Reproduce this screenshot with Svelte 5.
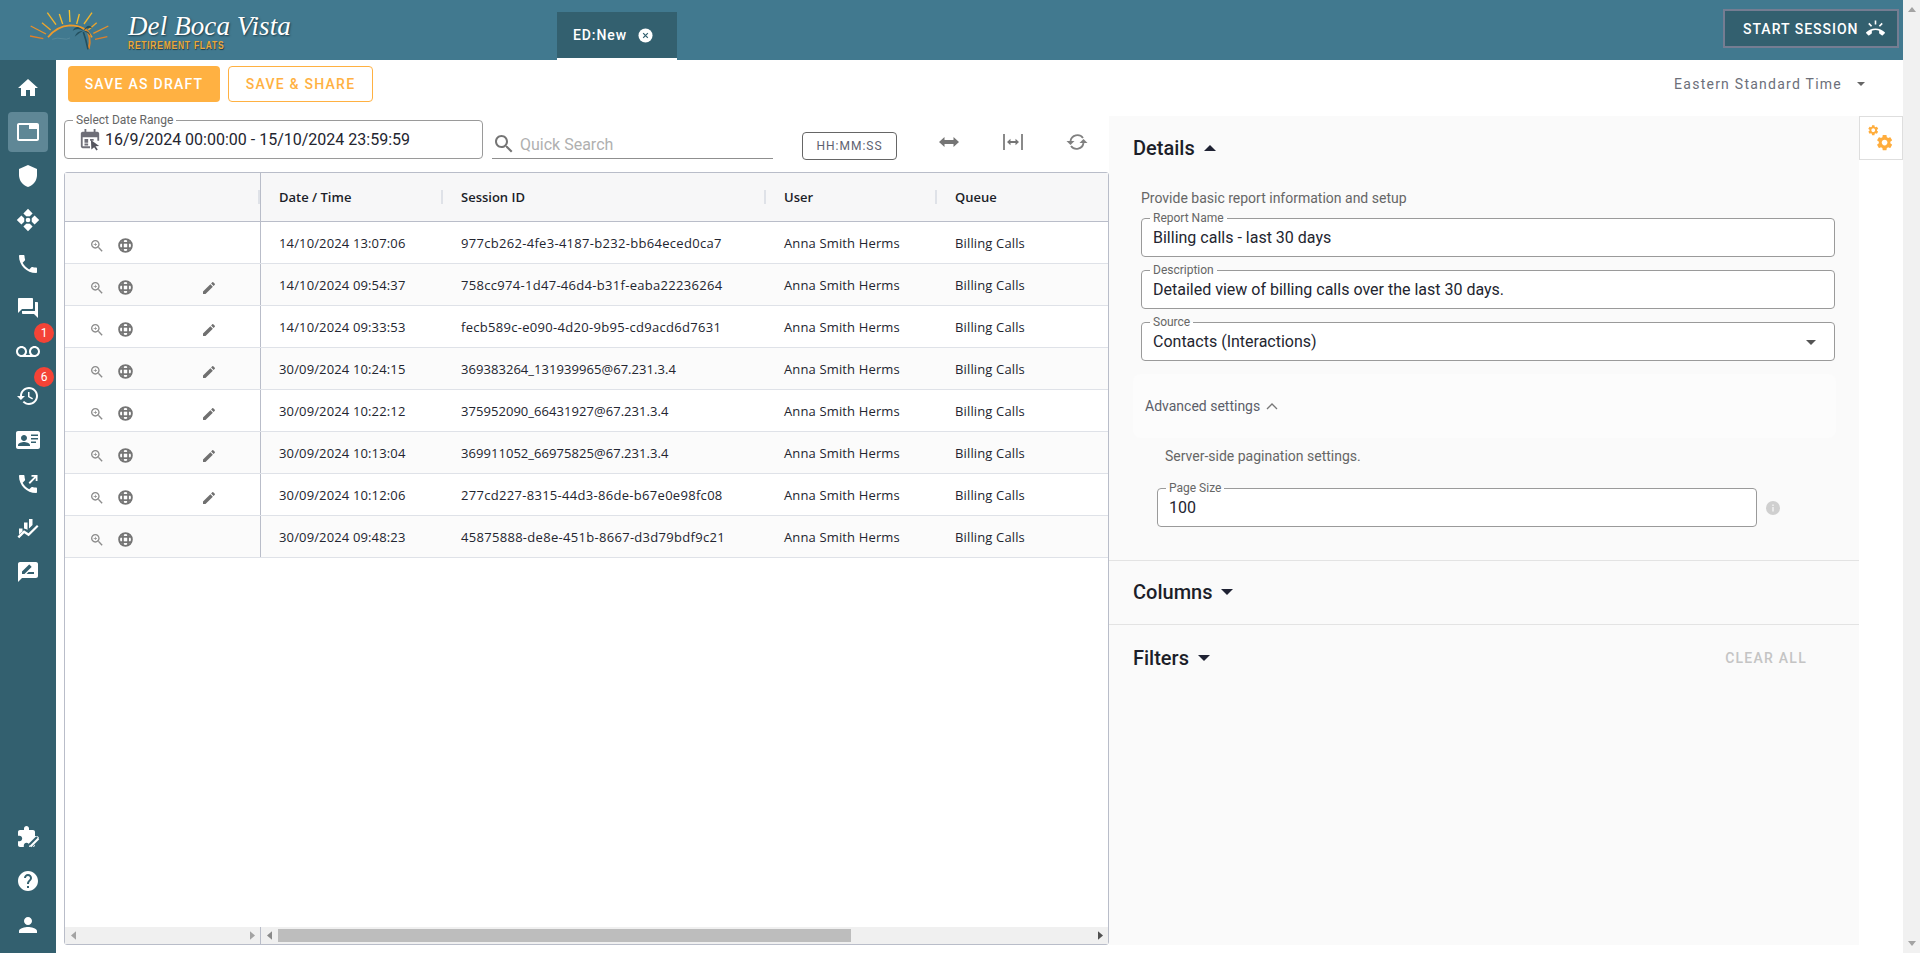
<script>
  const P = {
    home: 'M10 20v-6h4v6h5v-8h3L12 3 2 12h3v8z',
    tab: 'M21 3H3c-1.1 0-2 .9-2 2v14c0 1.1.9 2 2 2h18c1.1 0 2-.9 2-2V5c0-1.1-.9-2-2-2zm0 16H3V5h10v4h8v10z',
    shield: 'M12 1L3 5v6c0 5.55 3.84 10.74 9 12 5.16-1.26 9-6.45 9-12V5l-9-4z',
    hub: 'M12 .8l4.600 4.600L12 10 7.400 5.400zM12 14l4.600 4.600L12 23.200l-4.600-4.600zM5.400 7.400L10 12l-4.600 4.600L.8 12zM18.600 7.400L23.200 12l-4.600 4.600L14 12z',
    phone: 'M6.620 10.790c1.440 2.830 3.760 5.140 6.590 6.590l2.200-2.200c.27-.27.67-.36 1.020-.24 1.120.37 2.330.57 3.570.57.55 0 1 .45 1 1V20c0 .55-.45 1-1 1-9.390 0-17-7.610-17-17 0-.55.45-1 1-1h3.500c.55 0 1 .45 1 1 0 1.250.2 2.450.57 3.570.11.35.03.74-.25 1.020l-2.200 2.200z',
    forum: 'M21 6h-2v9H6v2c0 .55.45 1 1 1h11l4 4V7c0-.55-.45-1-1-1zm-4 6V3c0-.55-.45-1-1-1H3c-.55 0-1 .45-1 1v14l4-4h10c.55 0 1-.45 1-1z',
    voicemail: 'M18.500 6C15.460 6 13 8.460 13 11.500c0 1.330.47 2.550 1.260 3.500H9.740c.79-.95 1.260-2.170 1.260-3.500C11 8.460 8.540 6 5.500 6S0 8.460 0 11.500 2.460 17 5.500 17h13c3.040 0 5.500-2.460 5.500-5.500S21.540 6 18.500 6zm-13 9C3.570 15 2 13.430 2 11.500S3.570 8 5.500 8 9 9.570 9 11.500 7.430 15 5.500 15zm13 0c-1.930 0-3.500-1.570-3.500-3.500S16.570 8 18.500 8 22 9.570 22 11.500 20.430 15 18.500 15z',
    history: 'M13 3c-4.970 0-9 4.030-9 9H1l3.890 3.890.07.14L9 12H6c0-3.870 3.130-7 7-7s7 3.130 7 7-3.130 7-7 7c-1.930 0-3.680-.79-4.940-2.060l-1.420 1.420C8.270 19.990 10.510 21 13 21c4.970 0 9-4.030 9-9s-4.030-9-9-9zm-1 5v5l4.280 2.540.72-1.210-3.500-2.080V8H12z',
    card: 'M22 3H2C.9 3 0 3.900 0 5v14c0 1.100.9 2 2 2h20c1.100 0 2-.9 2-2V5c0-1.100-.9-2-2-2zM8 7c1.660 0 3 1.340 3 3s-1.340 3-3 3-3-1.340-3-3 1.340-3 3-3zm6 11H2v-1c0-2 4-3.100 6-3.100s6 1.100 6 3.100v1zm8-10h-7V6.500h7V8zm0 3.500h-7V10h7v1.500zm-2 3.500h-5v-1.500h5V15z',
    outgoing: 'M20 15.500c-1.250 0-2.450-.2-3.570-.57-.35-.11-.74-.03-1.020.24l-2.200 2.200c-2.830-1.440-5.150-3.750-6.590-6.590l2.200-2.210c.28-.26.36-.65.25-1C8.700 6.450 8.500 5.250 8.500 4c0-.55-.45-1-1-1H4c-.55 0-1 .45-1 1 0 9.390 7.610 17 17 17 .55 0 1-.45 1-1v-3.500c0-.55-.45-1-1-1zM15.500 3v1.800h2.900L12.600 10.600l1.300 1.300 5.800-5.800V9H21.500V3z',
    chart: 'M3 18.500v-6h3.500v2.700zM8 12.500V6.500h3.500v7.500l-1-.7zM13 12.500V3h3.500v6zM1.500 20.500l6.500-6.200 4.500 3 8.500-8.300 1.500 1.500-9.800 9.800-4.500-3-5 5z',
    review: 'M20 2H4c-1.100 0-2 .9-2 2v18l4-4h14c1.100 0 2-.9 2-2V4c0-1.100-.9-2-2-2zM6 14v-2.470l6.880-6.880c.2-.2.51-.2.71 0l1.770 1.770c.2.2.2.51 0 .71L8.470 14H6zm12 0h-7.500l2-2H18v2z',
    ext: 'M20.500 11H19V7c0-1.100-.9-2-2-2h-4V3.500C13 2.120 11.880 1 10.500 1S8 2.120 8 3.500V5H4c-1.100 0-1.990.9-1.990 2v3.800H3.500c1.490 0 2.700 1.210 2.700 2.700s-1.210 2.700-2.700 2.700H2V20c0 1.100.9 2 2 2h3.800v-1.500c0-1.490 1.210-2.700 2.700-2.700 1.490 0 2.700 1.210 2.700 2.700V22H17c1.100 0 2-.9 2-2v-4h1.500c1.380 0 2.500-1.120 2.500-2.500S21.880 11 20.500 11z',
    help: 'M12 2C6.480 2 2 6.480 2 12s4.480 10 10 10 10-4.480 10-10S17.520 2 12 2zm1 17h-2v-2h2v2zm2.070-7.750l-.9.92C13.450 12.900 13 13.500 13 15h-2v-.5c0-1.100.45-2.100 1.170-2.830l1.240-1.260c.37-.36.59-.86.59-1.410 0-1.100-.9-2-2-2s-2 .9-2 2H8c0-2.210 1.790-4 4-4s4 1.790 4 4c0 .88-.36 1.680-.93 2.250z',
    person: 'M12 12c2.210 0 4-1.790 4-4s-1.790-4-4-4-4 1.790-4 4 1.790 4 4 4zm0 2c-2.670 0-9 1.340-9 4v2h18v-2c0-2.660-6.330-4-9-4z',
    search: 'M15.500 14h-.79l-.28-.27C15.410 12.590 16 11.110 16 9.500 16 5.910 13.090 3 9.500 3S3 5.910 3 9.500 5.910 16 9.500 16c1.610 0 3.090-.59 4.230-1.570l.27.28v.79l5 4.990L20.490 19l-4.990-5zm-6 0C7.010 14 5 11.990 5 9.500S7.010 5 9.500 5 14 7.010 14 9.500 11.990 14 9.500 14z',
    zoomin: 'M15.500 14h-.79l-.28-.27C15.410 12.590 16 11.110 16 9.500 16 5.910 13.090 3 9.500 3S3 5.910 3 9.500 5.910 16 9.500 16c1.610 0 3.090-.59 4.230-1.570l.27.28v.79l5 4.990L20.490 19l-4.990-5zm-6 0C7.010 14 5 11.990 5 9.500S7.010 5 9.500 5 14 7.010 14 9.500 11.990 14 9.500 14zM12 10h-2v2H9v-2H7V9h2V7h1v2h2v1z',
    edit: 'M3 17.250V21h3.750L17.810 9.940l-3.750-3.750L3 17.250zM20.710 7.040c.39-.39.39-1.020 0-1.410l-2.340-2.340c-.39-.39-1.020-.39-1.410 0l-1.830 1.830 3.750 3.750 1.830-1.830z',
    ring: 'M23.710 16.670C20.660 13.780 16.540 12 12 12 7.460 12 3.340 13.780.29 16.670c-.18.18-.29.43-.29.71 0 .28.11.53.29.71l2.480 2.480c.18.18.43.29.71.29.27 0 .52-.11.7-.28.79-.74 1.690-1.360 2.660-1.850.33-.16.56-.5.56-.9v-3.100c1.450-.48 3-.73 4.600-.73s3.150.25 4.600.72v3.100c0 .39.23.74.56.9.98.49 1.870 1.120 2.670 1.850.18.18.43.28.7.28.28 0 .53-.11.71-.29l2.480-2.480c.18-.18.29-.43.29-.71 0-.27-.11-.52-.29-.7zM21.160 6.260l-1.410-1.410-3.560 3.550 1.410 1.410s3.450-3.520 3.560-3.550zM13 2h-2v5h2V2zM6.400 9.810L7.810 8.400 4.260 4.840 2.840 6.260c.11.03 3.560 3.550 3.560 3.550z',
    gear: 'M19.140 12.940c.04-.3.06-.61.06-.94 0-.32-.02-.64-.07-.94l2.030-1.580c.18-.14.23-.41.12-.61l-1.920-3.320c-.12-.22-.37-.29-.59-.22l-2.390.96c-.5-.38-1.030-.7-1.620-.94l-.36-2.540c-.04-.24-.24-.41-.48-.41h-3.840c-.24 0-.43.17-.47.41l-.36 2.540c-.59.24-1.130.57-1.620.94l-2.390-.96c-.22-.08-.47 0-.59.22L2.740 8.870c-.12.21-.08.47.12.61l2.030 1.580c-.05.3-.09.63-.09.94s.02.64.07.94l-2.030 1.580c-.18.14-.23.41-.12.61l1.920 3.320c.12.22.37.29.59.22l2.390-.96c.5.38 1.030.7 1.620.94l.36 2.540c.05.24.24.41.48.41h3.840c.24 0 .44-.17.47-.41l.36-2.540c.59-.24 1.130-.56 1.620-.94l2.390.96c.22.08.47 0 .59-.22l1.920-3.320c.12-.22.07-.47-.12-.61l-2.010-1.580zM12 15.600c-1.980 0-3.600-1.620-3.600-3.600s1.620-3.600 3.600-3.600 3.600 1.620 3.600 3.600-1.620 3.600-3.600 3.600z'
  };
  const top = [
    { i: 'home' }, { i: 'tab', active: true }, { i: 'shield' }, { i: 'hub' }, { i: 'phone' }, { i: 'forum' },
    { i: 'voicemail', badge: 1 }, { i: 'history', badge: 6 }, { i: 'card' }, { i: 'outgoing' }, { i: 'chart' }, { i: 'review' }
  ];
  const rows = [
    ['14/10/2024 13:07:06', '977cb262-4fe3-4187-b232-bb64eced0ca7', false],
    ['14/10/2024 09:54:37', '758cc974-1d47-46d4-b31f-eaba22236264', true],
    ['14/10/2024 09:33:53', 'fecb589c-e090-4d20-9b95-cd9acd6d7631', true],
    ['30/09/2024 10:24:15', '369383264_131939965@67.231.3.4', true],
    ['30/09/2024 10:22:12', '375952090_66431927@67.231.3.4', true],
    ['30/09/2024 10:13:04', '369911052_66975825@67.231.3.4', true],
    ['30/09/2024 10:12:06', '277cd227-8315-44d3-86de-b67e0e98fc08', true],
    ['30/09/2024 09:48:23', '45875888-de8e-451b-8667-d3d79bdf9c21', false]
  ];
  const rays = [
    [32,78,78,102,'#e8912a'],[66,68,92,90,'#eda52c'],[82,38,108,74,'#f2b52d'],[118,42,128,72,'#f5bd2e'],
    [148,30,150,66,'#f8c52e'],[178,42,170,72,'#f5bd2e'],[216,38,192,72,'#f2b52d'],[230,68,205,90,'#eda52c'],
    [265,78,220,100,'#e8912a'],[262,110,225,118,'#e07f28'],[30,108,70,116,'#e07f28']
  ];
</script>

<div class="page">
  <div class="app">
    <header class="topbar">
      <div class="logo">
        <svg class="sun" viewBox="0 0 300 180" width="100" height="60" aria-hidden="true">
          {#each rays as r}
            <line x1={r[0]} y1={r[1]} x2={r[2]} y2={r[3]} stroke={r[4]} stroke-width="4" />
          {/each}
          <path d="M84 112Q110 78 150 76Q196 76 216 112" fill="none" stroke="#ee9a2b" stroke-width="5" />
          <path d="M196 84Q216 110 206 146" fill="none" stroke="#d9822b" stroke-width="6" />
          <path d="M190 96Q198 118 204 148" fill="none" stroke="#24505f" stroke-width="5" />
          <path d="M190 92Q170 70 158 92Q174 82 190 92ZM190 92Q205 68 216 84Q202 80 190 92ZM190 92Q170 92 164 110Q178 98 190 92ZM190 92Q208 92 212 108Q202 96 190 92Z" fill="#24505f" />
          <path d="M96 118q16-6 30-2t24-2" fill="none" stroke="#5f8fa0" stroke-width="2" />
        </svg>
        <div class="brand">
          <div class="script">Del Boca Vista</div>
          <div class="flats">RETIREMENT FLATS</div>
        </div>
      </div>
      <div class="tab">
        <span>ED:New</span>
        <svg viewBox="0 0 16 16" width="15" height="15" aria-hidden="true"><circle cx="8" cy="8" r="7.500" fill="#fff" /><path d="M5.500 5.500l5 5M10.500 5.500l-5 5" stroke="#33606f" stroke-width="1.300" /></svg>
      </div>
      <button class="start">START SESSION <svg viewBox="0 0 24 24" width="19" height="19" aria-hidden="true"><path d={P.ring} fill="#fff" /></svg></button>
    </header>

    <div class="body">
      <nav class="side">
        <div class="side-group">
          {#each top as it}
            <div class="nav-item">
              <span class="nav-ic" class:active={it.active}>
                <svg viewBox="0 0 24 24" width="24" height="24" aria-hidden="true">
                  <path d={P[it.i]} fill="#fff" />
                  {#if it.i === 'hub'}
                    <circle cx="12" cy="12" r="3.800" fill="#33606f" />
                    <circle cx="12" cy="12" r="2.300" fill="#fff" />
                  {/if}
                </svg>
              </span>
              {#if it.badge}<span class="badge">{it.badge}</span>{/if}
            </div>
          {/each}
        </div>
        <div class="side-group">
          <div class="nav-item">
            <span class="nav-ic">
              <svg viewBox="0 0 24 24" width="24" height="24" aria-hidden="true">
                <path d={P.ext} fill="#fff" />
                <path d="M14 21l8-8" stroke="#33606f" stroke-width="5" />
                <path d="M14.500 21.500l8-8" stroke="#fff" stroke-width="2.200" />
              </svg>
            </span>
          </div>
          <div class="nav-item"><span class="nav-ic"><svg viewBox="0 0 24 24" width="24" height="24" aria-hidden="true"><path d={P.help} fill="#fff" /></svg></span></div>
          <div class="nav-item"><span class="nav-ic"><svg viewBox="0 0 24 24" width="24" height="24" aria-hidden="true"><path d={P.person} fill="#fff" /></svg></span></div>
        </div>
      </nav>

      <main class="main">
        <div class="toolbar">
          <button class="btn solid">SAVE AS DRAFT</button>
          <button class="btn outline">SAVE &amp; SHARE</button>
          <div class="tz">
            <span>Eastern Standard Time</span>
            <svg viewBox="0 0 10 5" width="8" height="4" aria-hidden="true"><path d="M0 0h10L5 5z" fill="#666" /></svg>
          </div>
        </div>

        <div class="content">
          <section class="left">
            <div class="filters">
              <fieldset class="field date">
                <legend>Select Date Range</legend>
                <div class="date-val">
                  <svg viewBox="0 0 24 24" width="22" height="24" aria-hidden="true">
                    <path d="M6 1h2v3h8V1h2v3h2c1 0 2 1 2 2v8h-2v-4H4v10h8v2H4c-1 0-2-1-2-2V6c0-1 1-2 2-2h2z" fill="#6f6f78" />
                    <path d="M6 12h4v4H6zM12 12h4v2h-4zM6 17h4v2H6z" fill="#6f6f78" />
                    <path d="M13 13l9 6.500-4 .5 2.500 3.500-1.500 1-2.500-3.500-3 2.500z" fill="#55555e" />
                  </svg>
                  <span>16/9/2024 00:00:00 - 15/10/2024 23:59:59</span>
                </div>
              </fieldset>
              <div class="search">
                <svg viewBox="0 0 24 24" width="24" height="24" aria-hidden="true"><path d={P.search} fill="#757575" /></svg>
                <span>Quick Search</span>
              </div>
              <button class="hms">HH:MM:SS</button>
              <div class="tool">
                <svg viewBox="0 0 20 10" width="20" height="10" aria-hidden="true"><path d="M0 5l5.500-5v3h9V0L20 5l-5.500 5V7h-9v3z" fill="#757575" /></svg>
              </div>
              <div class="tool">
                <svg viewBox="0 0 20 16" width="20" height="16" aria-hidden="true"><path d="M0 0h2v16H0zM18 0h2v16h-2z" fill="#8a8a8a" /><path d="M4 8l3.500-3.200v2.200h5V4.800L16 8l-3.500 3.200V9h-5v2.200z" fill="#757575" /></svg>
              </div>
              <div class="tool">
                <svg viewBox="0 0 22 18" width="22" height="18" aria-hidden="true">
                  <path d="M4.500 8A7 7 0 0 1 17 5" fill="none" stroke="#808080" stroke-width="1.800" />
                  <path d="M17.500 10A7 7 0 0 1 5 13" fill="none" stroke="#808080" stroke-width="1.800" />
                  <path d="M0.500 8h8L4.500 12zM13.500 10h8L17.500 6z" fill="#808080" />
                </svg>
              </div>
            </div>

            <div class="table">
              <div class="row head">
                <div class="frozen"><i class="sep"></i></div>
                <div class="c">Date / Time<i class="sep"></i></div>
                <div class="c">Session ID<i class="sep"></i></div>
                <div class="c">User<i class="sep"></i></div>
                <div class="c">Queue</div>
              </div>
              {#each rows as r, idx}
                <div class="row body-row" class:alt={idx % 2 === 1}>
                  <div class="frozen icons">
                    <svg viewBox="0 0 24 24" width="16" height="16" aria-hidden="true"><path d={P.zoomin} fill="#8c8c8c" /></svg>
                    <svg viewBox="0 0 16 16" width="15" height="15" aria-hidden="true">
                      <circle cx="8" cy="8" r="6.800" fill="none" stroke="#757575" stroke-width="2" />
                      <path d="M5.300 1.500v13M10.700 1.500v13M1.500 5.300h13M1.500 10.700h13" stroke="#757575" stroke-width="1.900" />
                      <rect x="6.300" y="6.300" width="3.400" height="3.400" fill="#fff" />
                    </svg>
                    {#if r[2]}
                      <svg viewBox="0 0 24 24" width="16" height="16" aria-hidden="true"><path d={P.edit} fill="#707070" /></svg>
                    {/if}
                  </div>
                  <div class="c">{r[0]}</div>
                  <div class="c sid" class:ip={r[1].includes('@')}>{r[1]}</div>
                  <div class="c">Anna Smith Herms</div>
                  <div class="c">Billing Calls</div>
                </div>
              {/each}
              <div class="spacer"></div>
              <div class="hscroll">
                <div class="hs hs-left">
                  <svg viewBox="0 0 6 10" width="5" height="9" aria-hidden="true"><path d="M6 0v10L0 5z" fill="#a3a3a3" /></svg>
                  <svg viewBox="0 0 6 10" width="5" height="9" aria-hidden="true"><path d="M0 0v10l6-5z" fill="#a3a3a3" /></svg>
                </div>
                <div class="hs hs-right">
                  <svg viewBox="0 0 6 10" width="5" height="9" aria-hidden="true"><path d="M6 0v10L0 5z" fill="#8a8a8a" /></svg>
                  <div class="thumb"></div>
                  <svg class="end" viewBox="0 0 6 10" width="5" height="9" aria-hidden="true"><path d="M0 0v10l6-5z" fill="#505050" /></svg>
                </div>
              </div>
            </div>
          </section>

          <aside class="panel">
            <div class="sec details">
              <h2>Details <svg viewBox="0 0 12 6" width="12" height="6" aria-hidden="true"><path d="M0 6h12L6 0z" fill="#1f2233" /></svg></h2>
              <div class="inner">
                <p class="hint">Provide basic report information and setup</p>
                <fieldset class="field"><legend>Report Name</legend><div class="val">Billing calls - last 30 days</div></fieldset>
                <fieldset class="field"><legend>Description</legend><div class="val">Detailed view of billing calls over the last 30 days.</div></fieldset>
                <fieldset class="field">
                  <legend>Source</legend>
                  <div class="val sel">Contacts (Interactions)<svg viewBox="0 0 10 5" width="10" height="5" aria-hidden="true"><path d="M0 0h10L5 5z" fill="#555" /></svg></div>
                </fieldset>
                <div class="adv">
                  <span>Advanced settings</span>
                  <svg viewBox="0 0 12 8" width="12" height="8" aria-hidden="true"><path d="M1 7l5-5 5 5" fill="none" stroke="#777" stroke-width="1.300" /></svg>
                </div>
                <p class="server">Server-side pagination settings.</p>
                <div class="page-row">
                  <fieldset class="field page-size"><legend>Page Size</legend><div class="val">100</div></fieldset>
                  <svg viewBox="0 0 14 14" width="14" height="14" aria-hidden="true"><circle cx="7" cy="7" r="7" fill="#cfcfcf" /><path d="M6.300 6h1.400v4.500H6.300zM6.300 3.500h1.400v1.400H6.300z" fill="#f4f4f4" /></svg>
                </div>
              </div>
            </div>
            <div class="sec collapsed">
              <h2>Columns <svg viewBox="0 0 12 6" width="12" height="6" aria-hidden="true"><path d="M0 0h12L6 6z" fill="#1f2233" /></svg></h2>
            </div>
            <div class="sec filt">
              <h2>Filters <svg viewBox="0 0 12 6" width="12" height="6" aria-hidden="true"><path d="M0 0h12L6 6z" fill="#1f2233" /></svg></h2>
              <span class="clear">CLEAR ALL</span>
            </div>
          </aside>

          <div class="gearcol">
            <div class="geartab">
              <svg viewBox="0 0 32 32" width="32" height="32" aria-hidden="true">
                <path d={P.gear} fill="#ffad3d" transform="translate(2 2) scale(.52)" />
                <path d={P.gear} fill="#ffad3d" transform="translate(10 11) scale(.8)" />
              </svg>
            </div>
          </div>
        </div>
      </main>
    </div>
  </div>
  <div class="vscroll">
    <svg viewBox="0 0 8 5" width="8" height="5" aria-hidden="true"><path d="M0 5h8L4 0z" fill="#a3a3a3" /></svg>
    <svg viewBox="0 0 8 5" width="8" height="5" aria-hidden="true"><path d="M0 0h8L4 5z" fill="#a3a3a3" /></svg>
  </div>
</div>

<style>
  :global(body) { margin: 0; background: #fff; font-family: Roboto, "Liberation Sans", sans-serif; }
  * { box-sizing: border-box; }
  .page { display: flex; width: 1920px; height: 953px; overflow: hidden; }
  .app { width: 1903px; display: flex; flex-direction: column; }
  .vscroll { width: 17px; background: #f1f1f1; display: flex; flex-direction: column; justify-content: space-between; align-items: center; padding: 7px 0; }

  .topbar { height: 60px; background: #41798f; display: flex; align-items: flex-end; flex: none; }
  .logo { width: 537px; margin-left: 20px; height: 60px; display: flex; }
  .sun { flex: none; }
  .brand { margin-left: 8px; padding-top: 12px; }
  .script { font-family: "Liberation Serif", serif; font-style: italic; font-size: 27px; line-height: 28px; color: #fff; letter-spacing: .1px; text-shadow: 1px 1px 2px #1e3d4a; white-space: nowrap; }
  .flats { font-family: "Liberation Sans", sans-serif; font-size: 11px; font-weight: 700; line-height: 11px; letter-spacing: 1px; color: #eba83a; text-shadow: 1px 1px 1px #1e3d4a; white-space: nowrap; transform: scaleX(.77); transform-origin: left; }
  .tab { width: 120px; height: 48px; background: #33606f; border-bottom: 2px solid #fff; color: #fff; font-size: 14px; font-weight: 500; letter-spacing: .9px; display: flex; align-items: center; padding-left: 16px; gap: 11px; }
  .start { margin: 0 4px 12px auto; width: 176px; height: 39px; background: #33606f; border: 2px solid #757d92; color: #fff; font: 500 14px Roboto, sans-serif; letter-spacing: 1px; display: flex; align-items: center; gap: 7px; padding: 0 0 0 18px; }

  .body { flex: 1; display: flex; min-height: 0; }
  .side { width: 56px; background: #33606f; flex: none; display: flex; flex-direction: column; justify-content: space-between; padding: 6px 0; }
  .nav-item { height: 44px; display: flex; align-items: center; justify-content: center; position: relative; }
  .nav-ic { width: 40px; height: 40px; display: flex; align-items: center; justify-content: center; border-radius: 4px; }
  .nav-ic.active { background: #5f8796; }
  .badge { position: absolute; left: 34px; top: -7px; width: 20px; height: 20px; border-radius: 50%; background: #f44336; color: #fff; font-size: 12px; display: flex; align-items: center; justify-content: center; }

  .main { flex: 1; display: flex; flex-direction: column; min-width: 0; }
  .toolbar { height: 56px; flex: none; display: flex; align-items: flex-start; padding: 6px 0 0 12px; gap: 8px; }
  .btn { height: 36px; border-radius: 4px; font: 500 14px Roboto, sans-serif; letter-spacing: 1.250px; padding: 0; }
  .btn.solid { width: 152px; background: #ffb142; border: 0; color: #fff; }
  .btn.outline { width: 145px; background: #fff; border: 1px solid #ffb142; color: #ffb142; }
  .tz { margin-left: auto; margin-right: 38px; height: 36px; display: flex; align-items: center; gap: 15px; color: #6c6f7a; font-size: 14px; letter-spacing: 1.250px; }

  .content { flex: 1; display: flex; min-height: 0; }
  .left { width: 1053px; flex: none; padding: 0 0 8px 8px; display: flex; flex-direction: column; }
  .filters { height: 56px; flex: none; display: flex; align-items: flex-start; }
  .field { margin: 0; min-width: 0; padding: 0 9px; border: 1px solid #9a9a9a; border-radius: 4px; background: #fff; height: 45px; display: block; }
  .field legend { font-size: 12px; line-height: 12px; color: #666; padding: 0 3px; margin-left: -1px; }
  .date { width: 419px; margin-top: -2px; }
  .date-val { display: flex; align-items: center; gap: 4px; font-size: 16px; color: #23252f; height: 26px; padding-left: 5px; white-space: nowrap; }
  .search { width: 281px; height: 38px; margin: 5px 0 0 9px; border-bottom: 1px solid #8f8f8f; display: flex; align-items: center; gap: 4px; padding: 8px 0 0 0; color: #b0b0b0; font-size: 16px; }
  .search span { padding-top: 2px; }
  .hms { width: 95px; height: 28px; margin: 16px 0 0 29px; background: #fff; border: 1px solid #666; border-radius: 4px; color: #5e6270; font: 400 12px Roboto, sans-serif; letter-spacing: 1px; padding: 0; }
  .tool { width: 64px; height: 20px; margin-top: 16px; display: flex; align-items: center; justify-content: center; }
  .hms + .tool { margin-left: 20px; }

  .table { flex: 1; min-height: 0; border: 1px solid #b9bdc9; border-radius: 3px; display: flex; flex-direction: column; font-family: "Open Sans", sans-serif; font-size: 13px; color: #23252f; }
  .row { height: 42px; flex: none; display: grid; grid-template-columns: 196px 182px 323px 171px 171px; border-bottom: 1px solid #dfe2e8; }
  .row.alt { background: #fbfbfb; }
  .row.head { height: 49px; background: #f7f7f8; border-bottom-color: #b9bdc9; font-weight: 600; color: #1c1e29; }
  .body-row .c { letter-spacing: .14px; }
  .body-row .sid { letter-spacing: .3px; }
  .body-row .sid.ip { letter-spacing: .05px; }
  .frozen { border-right: 1px solid #b9bdc9; position: relative; }
  .c { padding-left: 18px; display: flex; align-items: center; position: relative; white-space: nowrap; }
  .sep { position: absolute; right: 0; top: 17px; width: 2px; height: 14px; background: #dfe2e8; }
  .icons { display: grid; grid-template-columns: 29px 83px 16px; align-items: center; padding: 6px 0 0 24px; }

  .spacer { flex: 1; min-height: 0; }
  .hscroll { height: 17px; flex: none; display: flex; background: #f0f0f0; }
  .hs { display: flex; align-items: center; }
  .hs-left { width: 196px; border-right: 1px solid #b9bdc9; justify-content: space-between; padding: 0 5px 0 6px; }
  .hs-right { flex: 1; padding: 0 5px 0 6px; }
  .thumb { width: 573px; height: 13px; background: #bdbdbd; margin-left: 6px; }
  .end { margin-left: auto; }

  .panel { width: 750px; flex: none; background: #fafafa; margin-bottom: 8px; color: #1c1e29; }
  .sec { border-bottom: 1px solid #e3e3e3; padding: 16px 0 0 24px; }
  h2 { margin: 0; font-size: 20px; font-weight: 500; line-height: 30px; display: flex; align-items: center; gap: 9px; }
  .details { height: 445px; padding-top: 17px; }
  .inner { padding: 25px 24px 0 8px; }
  .hint { margin: 0 0 4px; font-size: 14px; line-height: 20px; color: #666; }
  .inner > .field { margin-bottom: 7px; }
  .val { font-size: 16px; line-height: 26px; color: #23252f; padding-left: 2px; margin-top: 1px; display: flex; align-items: center; justify-content: space-between; }
  .sel { padding-right: 9px; }
  .adv { height: 64px; margin: 13px -1px 0 -8px; background: #fcfcfc; border-radius: 8px; padding: 0 0 0 12px; display: flex; align-items: center; gap: 6px; font-size: 14px; color: #5b5e69; }
  .server { margin: 8px 0 0 24px; font-size: 14px; line-height: 20px; color: #666; }
  .page-row { display: flex; align-items: flex-end; gap: 9px; margin: 16px 0 0 16px; }
  .page-row svg { margin-bottom: 12px; }
  .page-size { width: 600px; }
  .collapsed { height: 64px; }
  .filt { border-bottom: 0; padding-top: 18px; display: flex; justify-content: space-between; align-items: flex-start; height: 66px; }
  .clear { margin-right: 52px; font-size: 14px; line-height: 30px; font-weight: 500; letter-spacing: 1.250px; color: #c4c4c4; }

  .gearcol { width: 44px; flex: none; }
  .geartab { height: 44px; border: 1px solid #dedede; background: #fff; display: flex; align-items: center; justify-content: center; }
</style>
